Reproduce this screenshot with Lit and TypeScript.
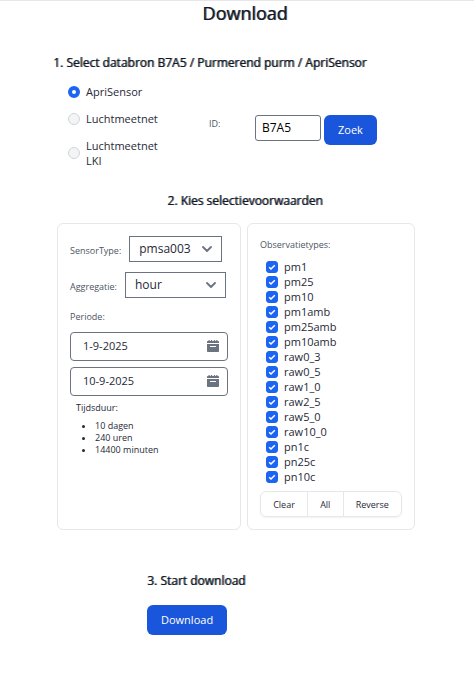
import { LitElement, html, css } from "lit";
import { customElement, state } from "lit/decorators.js";

const SOURCES = ["ApriSensor", "Luchtmeetnet", "Luchtmeetnet LKI"];

const TYPES = [
  "pm1", "pm25", "pm10", "pm1amb", "pm25amb", "pm10amb", "raw0_3", "raw0_5",
  "raw1_0", "raw2_5", "raw5_0", "raw10_0", "pn1c", "pn25c", "pn10c",
];

const calendar = html`<svg class="calendar" viewBox="0 0 12 12" aria-hidden="true">
  <path fill="currentColor" d="M0 3V1.800Q0 1 .8 1H1.500V0h1.200v1h1.200V0h1.200v1h1.800V0h1.200v1h1.200V0h1.200v1h.7q.8 0 .8.8V3z"/>
  <path fill="currentColor" fill-rule="evenodd" d="M0 4h12v7.200q0 .8-.8.8H.8Q0 12 0 11.200zM3 6v1h6V6z"/>
</svg>`;

const chevron = html`<svg class="chevron" viewBox="0 0 10 6" aria-hidden="true">
  <path fill="none" stroke="currentColor" stroke-width="1.800" stroke-linecap="round" stroke-linejoin="round" d="M1 1l4 4 4-4"/>
</svg>`;

@customElement("app-root")
export class AppRoot extends LitElement {
  @state() private source = SOURCES[0];
  @state() private selected = new Set(TYPES);

  static styles = css`
    :host {
      display: block;
      font-family: "Open Sans", "Noto Sans", sans-serif;
      font-size: 11px;
      line-height: 15px;
      color: #1f2937;
      background: #fff;
      border-top: 1px solid #e5e7eb;
    }
    * { box-sizing: border-box; }
    h1, h2, p, ul, fieldset { margin: 0; padding: 0; border: 0; }
    input, select, button { font: inherit; color: inherit; margin: 0; }
    h1, h2 { color: #111827; font-weight: 400; text-shadow: 1px 0 #111827b0; }
    h1 { font-size: 18px; line-height: 24px; text-align: center; padding-left: 16px; }
    h2 { font-size: 12px; line-height: 18px; }
    main { padding-bottom: 38px; }

    .source-title { margin: 29px 0 0 53px; }
    .source { display: flex; margin: 12px 0 0 68px; }
    .radios { width: 141px; display: flex; flex-direction: column; gap: 12px; }
    .radio { display: flex; align-items: center; gap: 6px; width: 90px; }
    .radio input {
      appearance: none; flex: none; width: 12px; height: 12px; border-radius: 50%;
      background: #f3f4f6; border: 1px solid #d1d5db;
    }
    .radio input:checked { background: #fff; border: 4px solid #1c64f2; }
    .lookup { display: flex; align-items: flex-start; padding-top: 31px; }
    .lookup label { width: 46px; }
    .caption { font-size: 9px; line-height: 18px; color: #4b5563; }
    .id { width: 66px; height: 26px; padding: 0 6px 2px; border: 1px solid #6b7280; border-radius: 3px; background: #fff; font-size: 12px; color: #000; }
    .primary {
      height: 30px; padding: 0 14px 2px; border: 0; border-radius: 6px;
      background: #1a56db; color: #fff; font-size: 11px;
    }
    .lookup .primary { margin-left: 3px; }

    .select-title { margin-top: 24px; text-align: center; padding-left: 16px; }
    .cards { display: grid; grid-template-columns: 184fr 168fr; gap: 6px; margin: 13px 59px 0 57px; }
    .card { border: 1px solid #e5e7eb; border-radius: 6px; padding: 12px; min-width: 0; }
    .field { display: flex; align-items: center; gap: 8px; margin-bottom: 10px; }
    .field .caption { padding-top: 4px; }
    .select { position: relative; display: flex; }
    .select select {
      appearance: none; height: 26px; padding: 0 30px 2px 9px; border: 1px solid #6b7280;
      border-radius: 0; background: #fff; font-size: 12px;
    }
    .sensor select { width: 93px; }
    .hour select { width: 101px; }
    .chevron { position: absolute; right: 10px; top: 10px; width: 10px; height: 6px; color: #6b7280; pointer-events: none; }
    .date { position: relative; display: block; margin-top: 6px; }
    .date input { display: block; width: 100%; height: 29px; padding: 0 36px 2px 12px; border: 1px solid #6b7280; border-radius: 4px; background: #fff; }
    .calendar { position: absolute; right: 9px; top: 8px; width: 12px; height: 12px; color: #6b7280; }
    .duration { font-size: 9px; line-height: 12px; }
    .duration p { margin: 6px 0 6px 6px; }
    .duration ul { padding-left: 25px; }

    .checks { margin: 5px 0 7px 6px; }
    .check { display: flex; align-items: center; gap: 6px; height: 15px; }
    .box { position: relative; display: flex; }
    .box input { appearance: none; width: 12px; height: 12px; border-radius: 3px; border: 1px solid #d1d5db; background: #f3f4f6; }
    .box input:checked { border-color: #1c64f2; background: #1c64f2; }
    .box svg { position: absolute; inset: 0; width: 12px; height: 12px; pointer-events: none; }
    .group { display: flex; border: 1px solid #e5e7eb; border-radius: 6px; box-shadow: 0 1px 2px #0000000d; }
    .group button { flex: auto; height: 24px; padding: 0; border: 0; background: none; font-size: 9px; }
    .group button + button { border-left: 1px solid #e5e7eb; }

    .start { margin: 42px 0 0 147px; }
    .start .primary { margin-top: 15px; }
  `;

  private toggle(type: string) {
    const next = new Set(this.selected);
    if (!next.delete(type)) next.add(type);
    this.selected = next;
  }

  render() {
    return html`<main>
      <h1>Download</h1>
      <h2 class="source-title">1. Select databron B7A5 / Purmerend purm / ApriSensor</h2>
      <div class="source">
        <fieldset class="radios" aria-label="Databron">
          ${SOURCES.map((s) => html`<label class="radio">
            <input type="radio" name="source" .checked=${this.source === s} @change=${() => (this.source = s)} />
            <span>${s}</span>
          </label>`)}
        </fieldset>
        <div class="lookup">
          <label class="caption" for="id">ID:</label>
          <input class="id" id="id" type="text" value="B7A5" />
          <button class="primary" type="button">Zoek</button>
        </div>
      </div>

      <h2 class="select-title">2. Kies selectievoorwaarden</h2>
      <div class="cards">
        <section class="card filters">
          <div class="field sensor">
            <label class="caption" for="sensor">SensorType:</label>
            <span class="select"><select id="sensor"><option>pmsa003</option></select>${chevron}</span>
          </div>
          <div class="field hour">
            <label class="caption" for="aggregation">Aggregatie:</label>
            <span class="select"><select id="aggregation"><option>hour</option></select>${chevron}</span>
          </div>
          <p class="caption">Periode:</p>
          <label class="date"><input type="text" value="1-9-2025" aria-label="Begindatum" />${calendar}</label>
          <label class="date"><input type="text" value="10-9-2025" aria-label="Einddatum" />${calendar}</label>
          <div class="duration">
            <p>Tijdsduur:</p>
            <ul><li>10 dagen</li><li>240 uren</li><li>14400 minuten</li></ul>
          </div>
        </section>
        <section class="card types">
          <p class="caption">Observatietypes:</p>
          <div class="checks">
            ${TYPES.map((t) => html`<label class="check">
              <span class="box">
                <input type="checkbox" .checked=${this.selected.has(t)} @change=${() => this.toggle(t)} />
                <svg viewBox="0 0 12 12" aria-hidden="true"><path d="M3.200 6.200l1.800 1.800 3.800-3.800" fill="none" stroke="#fff" stroke-width="1.500"/></svg>
              </span>
              <span>${t}</span>
            </label>`)}
          </div>
          <div class="group">
            <button type="button" @click=${() => (this.selected = new Set())}>Clear</button>
            <button type="button" @click=${() => (this.selected = new Set(TYPES))}>All</button>
            <button type="button" @click=${() => (this.selected = new Set(TYPES.filter((t) => !this.selected.has(t))))}>Reverse</button>
          </div>
        </section>
      </div>

      <section class="start">
        <h2>3. Start download</h2>
        <button class="primary" type="button">Download</button>
      </section>
    </main>`;
  }
}
